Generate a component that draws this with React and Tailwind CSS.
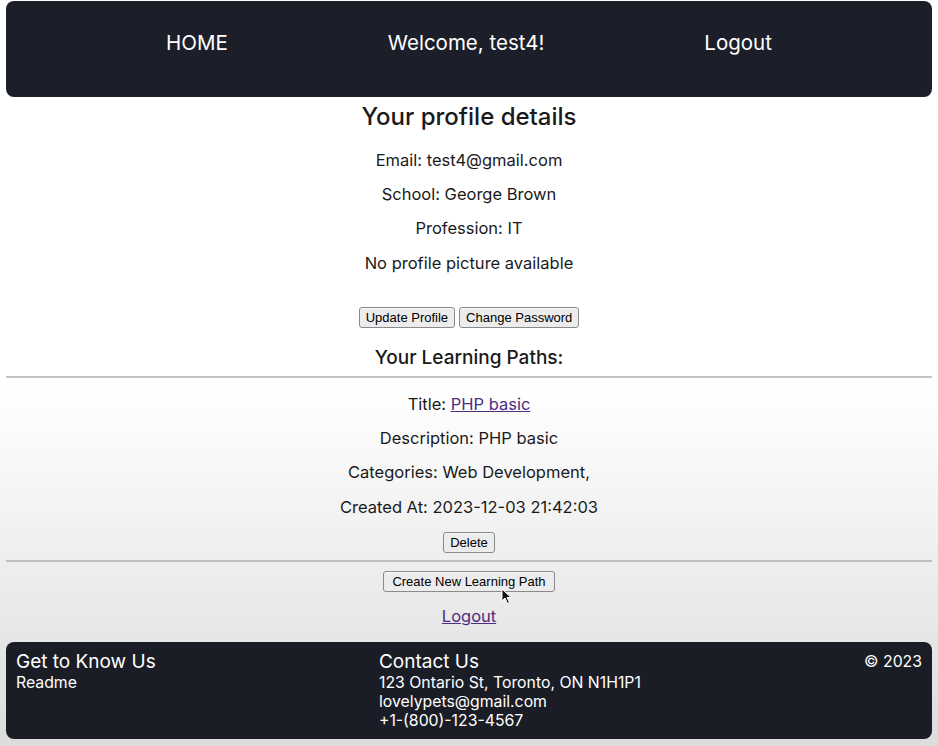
export default function App() {
  const btn =
    "px-[6px] h-[21px] text-[13px] leading-none text-black bg-[#ececec] border border-[#8a8a8a] rounded-[3px] font-['Liberation_Sans',Arial,sans-serif] shadow-[inset_0_1px_0_#fafafa]";

  return (
    <div className="min-h-screen w-full bg-[linear-gradient(to_bottom,#ffffff_0%,#ffffff_52%,#dcdcdc_100%)] font-['Inter',sans-serif] text-[#1a1a1a] pt-[1px] pb-[7px] relative">
      {/* Header */}
      <header className="mx-[6px] h-[96px] pb-[12px] rounded-[8px] bg-[#1c1f2a] flex items-center justify-evenly text-white text-[20.5px]">
        <a className="cursor-pointer">HOME</a>
        <span>Welcome, test4!</span>
        <a className="cursor-pointer">Logout</a>
      </header>

      {/* Profile */}
      <div className="flex flex-col items-center">
        <h2 className="text-[24px] font-medium mt-[6px] leading-[28px]">Your profile details</h2>
        <p className="text-[16.5px] mt-[19px] leading-[20px]">Email: test4@gmail.com</p>
        <p className="text-[16.5px] mt-[14px] leading-[20px]">School: George Brown</p>
        <p className="text-[16.5px] mt-[14px] leading-[20px]">Profession: IT</p>
        <p className="text-[16.5px] mt-[15px] leading-[20px]">No profile picture available</p>
        <div className="flex gap-[4px] mt-[34px]">
          <button className={btn}>Update Profile</button>
          <button className={btn}>Change Password</button>
        </div>
        <h3 className="text-[19px] font-medium mt-[18px] leading-[24px]">Your Learning Paths:</h3>
      </div>

      <hr className="mx-[6px] mt-[6px] border-t-2 border-[#c4c4c4]" />

      <div className="flex flex-col items-center">
        <p className="text-[16.5px] mt-[16px] leading-[20px]">
          Title: <a className="text-[#4b2e83] underline cursor-pointer">PHP basic</a>
        </p>
        <p className="text-[16.5px] mt-[14px] leading-[20px]">Description: PHP basic</p>
        <p className="text-[16.5px] mt-[14px] leading-[20px]">Categories: Web Development,</p>
        <p className="text-[16.5px] mt-[15px] leading-[20px]">Created At: 2023-12-03 21:42:03</p>
        <button className={btn + " mt-[15px]"}>Delete</button>
      </div>

      <hr className="mx-[6px] mt-[7px] border-t-2 border-[#bdbdbd]" />

      <div className="flex flex-col items-center">
        <div className="relative flex mt-[9px]">
          <button className={btn + " px-[8px]"}>Create New Learning Path</button>
          <svg className="absolute left-[118px] top-[17px]" width="11" height="17" viewBox="0 0 11 17">
            <path d="M1 1 L1 13 L4 10 L6.5 15.5 L8.5 14.5 L6 9.5 L10 9.5 Z" fill="#111" stroke="#fff" strokeWidth="1" />
          </svg>
        </div>
        <a className="text-[16.5px] mt-[14px] leading-[20px] text-[#4b2e83] underline cursor-pointer">Logout</a>
      </div>

      {/* Footer */}
      <footer className="mx-[6px] mt-[16px] h-[97px] rounded-[8px] bg-[#1b1d26] text-white px-[10px] pt-[9px] flex justify-between">
        <div>
          <h4 className="text-[19px] leading-[22px]">Get to Know Us</h4>
          <p className="text-[15.8px] leading-[19px]">Readme</p>
        </div>
        <div>
          <h4 className="text-[19px] leading-[22px]">Contact Us</h4>
          <p className="text-[15.8px] leading-[19px]">123 Ontario St, Toronto, ON N1H1P1</p>
          <p className="text-[15.8px] leading-[19px]">lovelypets@gmail.com</p>
          <p className="text-[15.8px] leading-[19px]">+1-(800)-123-4567</p>
        </div>
        <div>
          <p className="text-[15.8px] leading-[19px] pt-[1px]">© 2023</p>
        </div>
      </footer>
    </div>
  );
}
